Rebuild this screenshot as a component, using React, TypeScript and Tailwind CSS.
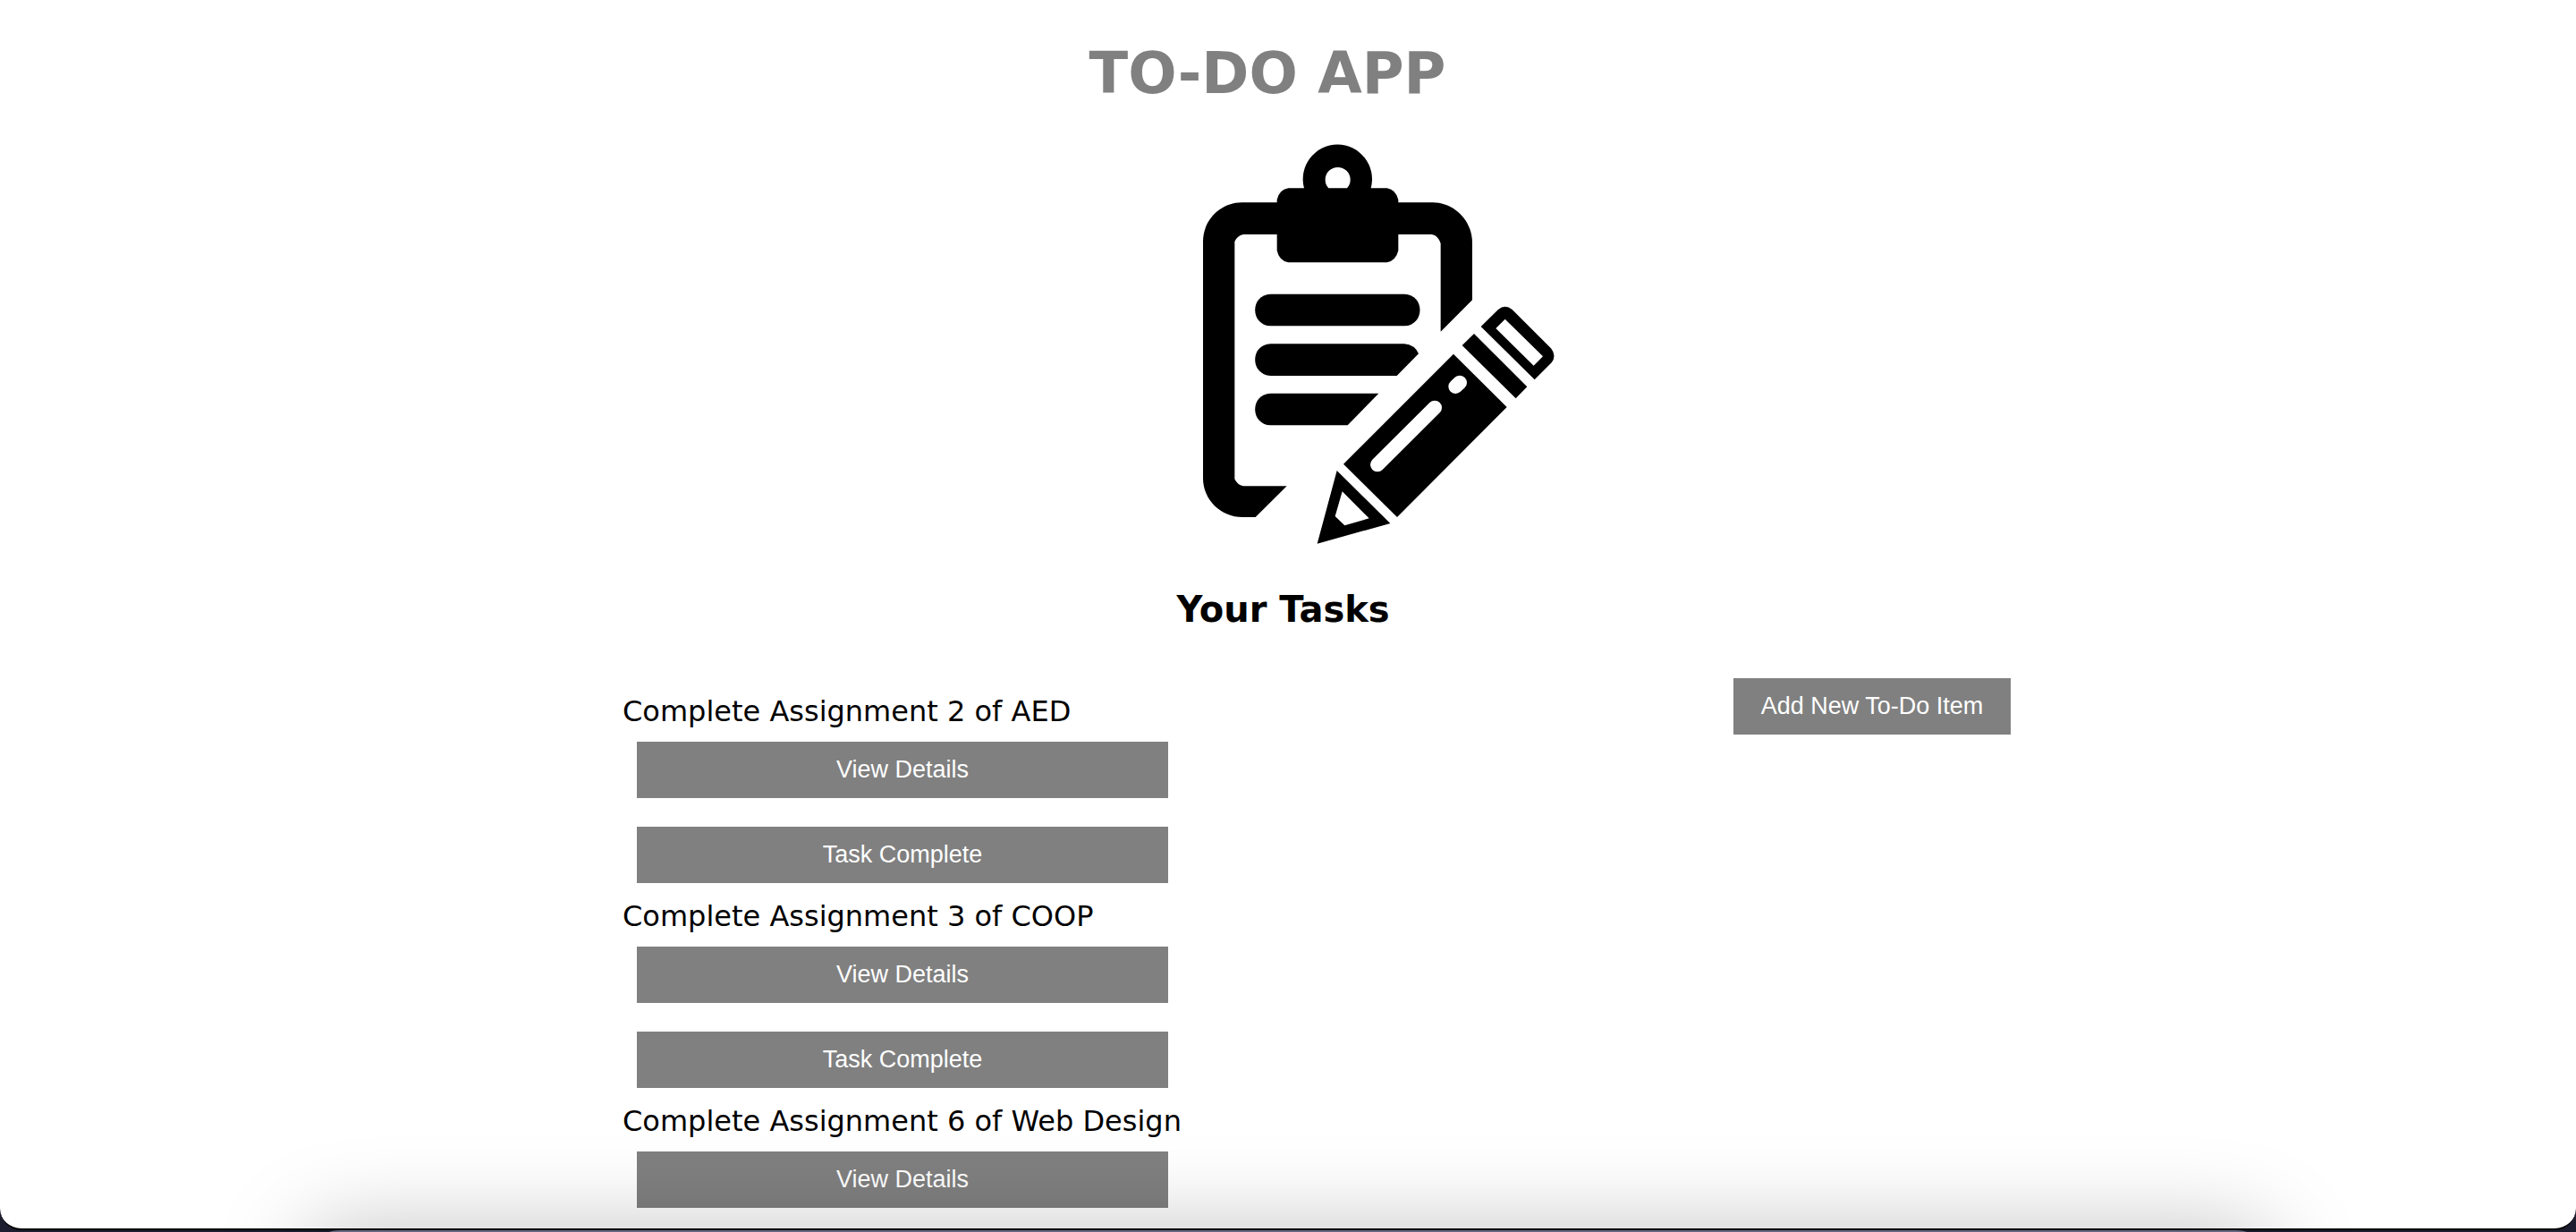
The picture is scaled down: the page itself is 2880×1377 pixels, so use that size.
import React from "react";

const BUTTON =
  "h-[63px] bg-[#808080] px-7 pb-0.5 text-center whitespace-nowrap font-['Liberation_Sans',Arial,sans-serif] text-[27px] leading-8 text-white";

const tasks = [
  { title: "Complete Assignment 2 of AED", actions: ["View Details", "Task Complete"] },
  { title: "Complete Assignment 3 of COOP", actions: ["View Details", "Task Complete"] },
  { title: "Complete Assignment 6 of Web Design", actions: ["View Details"] },
];

function ClipboardIcon() {
  return (
    <svg
      viewBox="72 63 1182 1341"
      className="h-[447px] w-[394px]"
      role="img"
      aria-label="Clipboard with pencil"
    >
      <path d="M205 259H330V366H210Q190 370 181 390V1186Q190 1206 210 1210H356L251 1314H208C134 1314 75 1254 75 1184V390C75 316 136 259 205 259Z" />
      <path d="M720 259H846C914 259 978 316 978 394V586L872 692V396Q864 370 842 366H720Z" />
      <path
        fillRule="evenodd"
        d="M414 211A116 116 0 1 1 638 211H692Q722 216 730 250V420Q722 454 692 460H361Q330 454 323 420V250Q330 216 361 211ZM496 211H558A42 42 0 1 0 496 211Z"
      />
      <path d="M302 566H750C820 568 820 670 750 673H302C232 670 232 568 302 566Z" />
      <path d="M302 733H750Q785 736 798 766L725 840H302C232 837 232 735 302 733Z" />
      <path d="M302 899H664L560 1006H302C232 1003 232 901 302 899Z" />
      <path d="M915 767L1094 945L726 1314L546 1136Z" />
      <path
        d="M660 1138L852 947M922 876L936 863"
        fill="none"
        stroke="white"
        strokeWidth="48"
        strokeLinecap="round"
      />
      <path d="M984 699L1162 877L1124 916L944 738Z" />
      <path
        fillRule="evenodd"
        d="M1007 675L1065 618Q1088 598 1112 618L1242 748Q1262 772 1244 796L1187 853ZM1088 650L1057 681L1184 806L1215 775Z"
      />
      <path
        fillRule="evenodd"
        d="M524 1158L703 1335L458 1403ZM542 1228L518 1311L550 1342L632 1318Z"
      />
    </svg>
  );
}

export default function App() {
  return (
    <div className="relative h-screen overflow-hidden bg-[#1c1e30] pb-0.5 font-['DejaVu_Sans',Verdana,sans-serif] text-black">
      <div className="h-full overflow-hidden rounded-b-[24px] border-b-2 border-black bg-white">
        <header className="flex flex-col items-center">
          <h1 className="mt-11 mr-[46px] text-[64px] leading-[76px] font-bold text-[#808080]">
            TO-DO APP
          </h1>
          <div className="mt-[41px] ml-[202px]">
            <ClipboardIcon />
          </div>
          <h2 className="mt-12 mr-[11px] text-[40px] leading-[50px] font-bold">Your Tasks</h2>
        </header>
        <main className="mx-auto mt-[52px] flex w-[1616px] max-w-full items-start justify-between">
          <ul className="mt-4 ml-16">
            {tasks.map((task) => (
              <li key={task.title} className="flex flex-col">
                <p className="h-[55px] text-[32px] leading-[42px]">{task.title}</p>
                <div className="mr-4 mb-4 ml-4 flex w-[594px] flex-col gap-8">
                  {task.actions.map((action) => (
                    <button key={action} type="button" className={BUTTON}>
                      {action}
                    </button>
                  ))}
                </div>
              </li>
            ))}
          </ul>
          <button type="button" className={`${BUTTON} w-[310px]`}>
            Add New To-Do Item
          </button>
        </main>
      </div>
      <div className="pointer-events-none absolute right-[340px] -bottom-[98px] left-[340px] h-[100px] rounded-t-[40px] bg-[#666880] shadow-[0_0_100px_rgba(0,0,0,0.25)]" />
    </div>
  );
}
